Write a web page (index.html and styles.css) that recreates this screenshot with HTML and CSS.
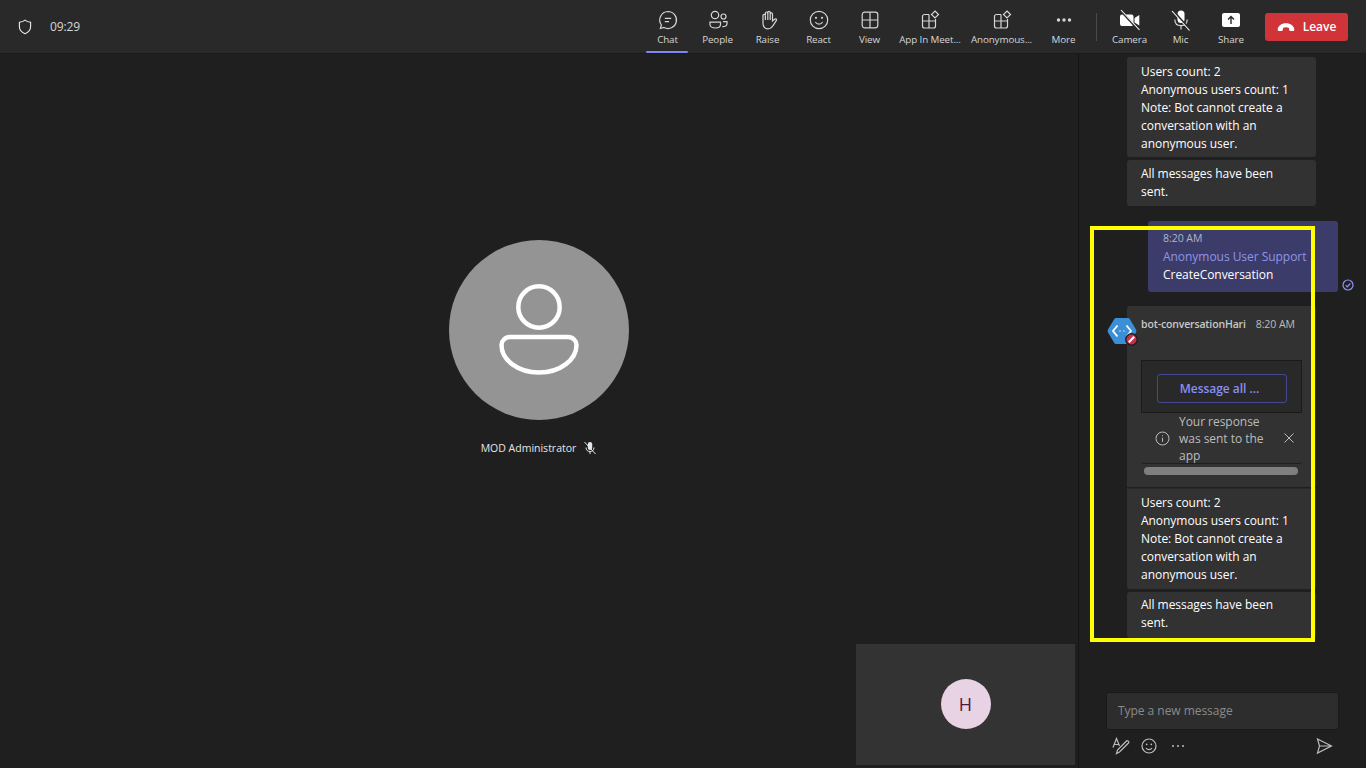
FILE: index.html
```html
<!doctype html>
<html>
  <head>
    <title>Meeting</title>
    <link rel="stylesheet" href="styles.css">
  </head>
  <body>
    <div class="topbar">
      <div class="call-info">
        <svg class="shield" width="16" height="16" viewBox="0 0 16 16"><path d="M8 1.200c1.700 1.400 3.500 2 5.600 2.100v4.200c0 3.400-2 5.800-5.600 7.200-3.600-1.400-5.600-3.800-5.600-7.200V3.300C4.500 3.200 6.300 2.600 8 1.200z"/></svg>
        <span class="timer">09:29</span>
      </div>
      <div class="tools">
        <div class="tool active">
          <svg width="22" height="22" viewBox="0 0 22 22"><path d="M11 2.500a8.500 8.500 0 1 1-4 16l-3.600 1 1-3.500A8.500 8.500 0 0 1 11 2.500z"/><path d="M7.800 9.300h6.400M7.800 12.700h4.200"/></svg>
          <span>Chat</span>
        </div>
        <div class="tool people">
          <svg width="22" height="22" viewBox="0 0 22 22"><circle cx="8" cy="6" r="3.700"/><circle cx="16.500" cy="7.500" r="2.500"/><path d="M3 13.200h10.500v2.300c0 2.200-2.300 3.500-5.200 3.500S3 17.700 3 15.500z"/><path d="M16 12.700h4v1.800c0 2-1.800 3.200-4.600 3.200"/></svg>
          <span>People</span>
        </div>
        <div class="tool">
          <svg width="22" height="22" viewBox="0 0 22 22"><path d="M6 14V6.500a1.200 1.200 0 0 1 2.400 0V4.200a1.200 1.200 0 0 1 2.400 0V3.500a1.200 1.200 0 0 1 2.400 0v1.200a1.200 1.200 0 0 1 2.300.3V12l2-1.800c1.200-1 2.600.2 1.800 1.400l-3.400 5.200c-1.100 1.800-2.700 3-5 3-3 0-4.900-2-4.900-5.800z"/><path d="M8.400 6.500V11M10.800 4v7M13.200 4.500V11"/></svg>
          <span>Raise</span>
        </div>
        <div class="tool">
          <svg width="22" height="22" viewBox="0 0 22 22"><circle cx="11" cy="11" r="8.700"/><circle class="fill" cx="8" cy="8.800" r="1.100"/><circle class="fill" cx="14" cy="8.800" r="1.100"/><path d="M7.300 13c1 1.500 2.200 2.200 3.700 2.200s2.700-.7 3.700-2.200"/></svg>
          <span>React</span>
        </div>
        <div class="tool">
          <svg width="22" height="22" viewBox="0 0 22 22"><rect x="3.200" y="3.200" width="15.600" height="15.600" rx="2.500"/><path d="M11 3.200v15.600M3.200 11h15.600"/></svg>
          <span>View</span>
        </div>
        <div class="tool app">
          <svg width="22" height="22" viewBox="0 0 22 22"><path d="M10 5.500H5.500a2 2 0 0 0-2 2V17a2 2 0 0 0 2 2h9a2 2 0 0 0 2-2v-7M3.500 12h13M10 5.500V19"/><path d="M16 2l3.500 3.500L16 9l-3.500-3.500z"/></svg>
          <span>App In Meet...</span>
        </div>
        <div class="tool anon">
          <svg width="22" height="22" viewBox="0 0 22 22"><path d="M10 5.500H5.500a2 2 0 0 0-2 2V17a2 2 0 0 0 2 2h9a2 2 0 0 0 2-2v-7M3.500 12h13M10 5.500V19"/><path d="M16 2l3.500 3.500L16 9l-3.500-3.500z"/></svg>
          <span>Anonymous...</span>
        </div>
        <div class="tool">
          <svg width="22" height="22" viewBox="0 0 22 22"><circle class="fill" cx="5.500" cy="11" r="1.700"/><circle class="fill" cx="11" cy="11" r="1.700"/><circle class="fill" cx="16.500" cy="11" r="1.700"/></svg>
          <span>More</span>
        </div>
        <div class="tool-sep"></div>
        <div class="tool">
          <svg width="22" height="22" viewBox="0 0 22 22"><path class="solid" d="M3 5.500h9.500a2 2 0 0 1 2 2v7.500a2 2 0 0 1-2 2H3a2 2 0 0 1-2-2V7.500a2 2 0 0 1 2-2z"/><path class="solid" d="M15.500 9l4.800-3v10.500L15.500 13.500z"/><path class="cut" d="M1 1l18.500 20"/><path class="slash" d="M2 1l18.500 20"/></svg>
          <span>Camera</span>
        </div>
        <div class="tool">
          <svg width="22" height="22" viewBox="0 0 22 22"><rect class="solid" x="7.500" y="1.500" width="7" height="12.500" rx="3.500"/><path d="M4.800 10.500c0 3.800 2.500 6.200 6.200 6.200s6.200-2.400 6.200-6.200M11 16.700v3.800"/><path class="cut" d="M2.800 1.500l17 19"/><path class="slash" d="M2 2l17.500 19.500"/></svg>
          <span>Mic</span>
        </div>
        <div class="tool share">
          <svg width="22" height="22" viewBox="0 0 22 22"><rect class="solid" x="2" y="4" width="18" height="14" rx="2"/><path class="on-solid" d="M11 15V8M8 10.500L11 7.500l3 3"/></svg>
          <span>Share</span>
        </div>
        <div class="leave">
          <svg width="18" height="10" viewBox="0 0 18 10"><path d="M.7 7.400C1 4 4.400 1.300 9 1.300s8 2.700 8.300 6.100c.1 1-.5 1.500-1.300 1.500h-2.600c-.8 0-1.300-.5-1.300-1.300V5.900C11 5.400 10 5.200 9 5.200s-2 .2-3.100.7v1.700c0 .8-.5 1.300-1.300 1.300H2c-.8 0-1.400-.5-1.300-1.500z"/></svg>
          <span>Leave</span>
        </div>
      </div>
    </div>

    <div class="main">
      <div class="stage">
        <div class="participant">
          <div class="avatar">
            <svg width="84" height="92" viewBox="0 0 84 92"><circle cx="42" cy="23" r="20.700"/><path d="M13 53h58c5 0 8.500 4 8.500 8C79.500 76 63 88.500 42 88.500S4.500 76 4.500 61c0-4 3.500-8 8.500-8z"/></svg>
          </div>
          <div class="name-tag">
            <span>MOD Administrator</span>
            <svg width="14" height="14" viewBox="0 0 14 14"><rect x="4.800" y="1" width="4.400" height="8" rx="2.200"/><path class="line" d="M3 6.500c0 2.500 1.500 4 4 4s4-1.500 4-4M7 10.500V13"/><path class="line" d="M1.500 1l11 12"/></svg>
          </div>
        </div>
        <div class="self-tile"><div class="initial">H</div></div>
      </div>

      <div class="chat">
        <div class="messages">
          <div class="bubble other top-group">
            <div class="block">Users count: 2<br>Anonymous users count: 1<br>Note: Bot cannot create a conversation with an anonymous user.</div>
          </div>
          <div class="bubble other second top-group">
            <div class="block">All messages have been sent.</div>
          </div>

          <div class="mine-row">
            <div class="bubble mine">
              <div class="msg-time">8:20 AM</div>
              <div class="mention">Anonymous User Support</div>
              <div>CreateConversation</div>
            </div>
            <svg class="read" width="12" height="12" viewBox="0 0 12 12"><circle cx="6" cy="6" r="5"/><path d="M3.700 6.200l1.600 1.600 3-3.300"/></svg>
          </div>

          <div class="bot-row">
            <div class="bot-icon">
              <svg width="30" height="30" viewBox="0 0 30 30"><path class="hex" d="M9 2h12a2 2 0 0 1 1.700 1L29 13.500a3 3 0 0 1 0 3L22.700 27a2 2 0 0 1-1.700 1H9a2 2 0 0 1-1.700-1L1 16.500a3 3 0 0 1 0-3L7.300 3A2 2 0 0 1 9 2z"/><path class="code" d="M10.500 9.500L6 15l4.500 5.500M19.500 9.500L24 15l-4.500 5.500"/><circle class="dot" cx="13" cy="15" r=".8"/><circle class="dot" cx="17" cy="15" r=".8"/></svg>
              <svg class="blocked" width="13" height="13" viewBox="0 0 13 13"><circle class="ring" cx="6.500" cy="6.500" r="6.500"/><circle class="red" cx="6.500" cy="6.500" r="5"/><path class="bar" d="M3.800 9.200l5.400-5.400"/></svg>
            </div>
            <div class="bubble other bot">
              <div class="bot-head">
                <span class="bot-name">bot-conversationHari</span>
                <span class="bot-time">8:20 AM</span>
              </div>
              <div class="card">
                <div class="card-btn">Message all ...</div>
              </div>
              <div class="notice">
                <svg class="info" width="15" height="15" viewBox="0 0 15 15"><circle cx="7.500" cy="7.500" r="6.500"/><path d="M7.500 6.800v4M7.500 4.300v.9"/></svg>
                <div class="notice-text">Your response was sent to the app</div>
                <svg class="close" width="10" height="10" viewBox="0 0 10 10"><path d="M.5.500l9 9M9.500.500l-9 9"/></svg>
              </div>
              <div class="scrollbar"></div>
            </div>
          </div>
          <div class="bubble other attached">
            <div class="block">Users count: 2<br>Anonymous users count: 1<br>Note: Bot cannot create a conversation with an anonymous user.</div>
          </div>
          <div class="bubble other second">
            <div class="block">All messages have been sent.</div>
          </div>
        </div>

        <div class="composer">
          <div class="input">Type a new message</div>
          <div class="composer-tools">
            <svg width="18" height="18" viewBox="0 0 18 18"><path d="M1 10.500L4.500 1.500l3 7.500M2.200 7.500h4.200"/><path d="M4.500 16.500l1-3.500 9-9c1-1 3 .8 2 2l-9 9z"/></svg>
            <svg width="16" height="16" viewBox="0 0 16 16"><circle cx="8" cy="8" r="7"/><circle class="fill" cx="5.700" cy="6.300" r=".9"/><circle class="fill" cx="10.300" cy="6.300" r=".9"/><path d="M5 10c.8 1.100 1.800 1.700 3 1.700s2.200-.6 3-1.700"/></svg>
            <svg class="dots" width="14" height="14" viewBox="0 0 14 14"><circle class="fill" cx="2" cy="7" r="1"/><circle class="fill" cx="7" cy="7" r="1"/><circle class="fill" cx="12" cy="7" r="1"/></svg>
            <svg class="send" width="18" height="18" viewBox="0 0 18 18"><path d="M2.500 2l14 7-14 7 2-7zM4.500 9h12"/></svg>
          </div>
        </div>
      </div>
    </div>

    <div class="highlight"></div>
  </body>
</html>
```

FILE: styles.css
```css
html, body {margin: 0; height: 100%; overflow: hidden;}
body {background: #1f1f1f; color: #fff; font-family: "Open Sans", "Noto Sans", sans-serif; font-size: 12px; line-height: 18px; display: flex; flex-direction: column; height: 768px;}
svg {display: block; fill: none; stroke: currentColor; stroke-width: 1.200;}
svg .fill {fill: currentColor; stroke: none;}

/* top bar */
.topbar {height: 53px; background: #292929; border-bottom: 1px solid #1a1a1a; display: flex; justify-content: space-between; flex: none;}
.call-info {display: flex; align-items: center; padding-left: 17px; color: #d6d6d6;}
.shield {stroke-width: 1.100; color: #eee;}
.timer {margin-left: 17px; font-size: 12px; letter-spacing: -.1px;}
.tools {display: flex; align-items: flex-start; padding-right: 18px;}
.tool {width: 51px; height: 53px; box-sizing: border-box; padding-top: 9px; display: flex; flex-direction: column; align-items: center; color: #d6d6d6; position: relative;}
.tool span {font-size: 9.800px; line-height: 14px; margin-top: 2px; white-space: nowrap; letter-spacing: -.1px;}
.tool.people {width: 49px;}
.tool.app {width: 70px;}
.tool.anon {width: 73px;}
.tool.share {width: 50px;}
.tool.active:after {content: ""; position: absolute; left: 4px; right: 5px; bottom: 0; height: 2px; background: #7f85f5; border-radius: 1px;}
.tool-sep {width: 1px; height: 28px; margin: 13px 7px 0 7px; background: #4a4a4a;}
.tool .solid {fill: #fff; stroke: none;}
.tool .on-solid {stroke: #292929; stroke-width: 1.400;}
.tool .cut {stroke: #292929; stroke-width: 2;}
.tool .slash {stroke: #fff; stroke-width: 1.100;}
.leave {width: 83px; height: 28px; margin: 13px 0 0 9px; background: #d13438; border-radius: 3px; display: flex; align-items: center; justify-content: center; gap: 8px; font-weight: 600; font-size: 12px;}
.leave svg {fill: #fff; stroke: none;}

/* main area */
.main {flex: 1; display: flex; min-height: 0;}
.stage {flex: 1; position: relative; display: flex; justify-content: center;}
.participant {padding-top: 186px; display: flex; flex-direction: column; align-items: center;}
.avatar {width: 180px; height: 180px; border-radius: 50%; background: #949494; display: flex; align-items: center; justify-content: center;}
.avatar svg {stroke: #fff; stroke-width: 4.500;}
.name-tag {display: flex; align-items: center; gap: 7px; margin-top: 19px; font-size: 10.500px; color: #e6e6e6;}
.name-tag svg {fill: #e6e6e6; stroke: none;}
.name-tag svg .line {fill: none; stroke: #e6e6e6; stroke-width: 1;}
.self-tile {position: absolute; right: 3px; bottom: 3px; width: 219px; height: 121px; box-sizing: border-box; padding-bottom: 1px; background: #333; display: flex; align-items: center; justify-content: center;}
.initial {width: 50px; height: 50px; border-radius: 50%; background: #e8d3e4; color: #4f1a42; font-size: 18px; line-height: 50px; text-align: center;}

/* chat panel */
.chat {width: 287px; flex: none; border-left: 1px solid #141414; display: flex; flex-direction: column; letter-spacing: -.04px;}
.messages {flex: 1; padding-top: 3px; min-height: 0; overflow: hidden;}
.bubble {box-sizing: border-box; border-radius: 3px;}
.other {background: #323232; width: 189px; margin-left: 48px;}
.block {padding: 5px 14px;}
.top-group .block {padding: 6px 14px 4px;}
.second {margin-top: 3px;}
.second .block {padding: 4px 14px 6px;}
.second.top-group .block {padding: 5px 14px;}
.attached {margin-top: 1px; border-top: 1px solid #292929; border-radius: 0 0 3px 3px;}
.mine-row {display: flex; margin-top: 15px; margin-left: 69px; align-items: flex-end;}
.mine {width: 190px; height: 71px; background: #3b3c69; padding: 8px 0 0 15px; line-height: 18px;}
.msg-time {font-size: 10.500px; color: #b4b4c6; margin-bottom: 1px;}
.mention {color: #8f94e8; white-space: nowrap;}
.read {margin: 0 0 0 4px; position: relative; top: -1px; color: #8f94f5; stroke-width: 1.200;}
.bot-row {margin-top: 14px; position: relative;}
.bot-icon {position: absolute; left: 28px; top: 10px; width: 30px; height: 30px;}
.bot-icon svg {stroke: none;}
.bot-icon .hex {fill: #3b8fd6;}
.bot-icon .code {stroke: #fff; stroke-width: 1.800;}
.bot-icon .dot {fill: #cfe4f7;}
.blocked {position: absolute; right: -1px; bottom: 0;}
.blocked .ring {fill: #1f1f1f;}
.blocked .red {fill: #c4314b;}
.blocked .bar {stroke: #fff; stroke-width: 2.200;}
.bot {height: 181px; padding: 0 14px; border-radius: 3px 3px 0 0;}
.bot-head {height: 54px; padding-top: 9px; box-sizing: border-box; display: flex; justify-content: space-between; font-size: 10.500px; color: #c8c8c8; white-space: nowrap;}
.bot-name {font-weight: 600; letter-spacing: -.15px;}
.bot-time {margin-right: 7px; color: #bdbdbd;}
.card {width: 161px; height: 53px; box-sizing: border-box; background: #292929; border: 1px solid #1a1a1a; padding: 13px 14px 13px 15px;}
.card-btn {height: 29px; box-sizing: border-box; border: 1px solid #444791; border-radius: 3px; padding-right: 5px; color: #8a8ef5; font-weight: 600; line-height: 27px; text-align: center;}
.notice {width: 161px; height: 51px; box-sizing: border-box; border-bottom: 1px solid #1f1f1f; border-radius: 0 0 3px 3px; display: flex; align-items: center; color: #bcbcbc; line-height: 17px;}
.info {margin-left: 14px; flex: none; stroke-width: 1;}
.notice-text {width: 88px; margin-left: 9px; flex: none;}
.close {margin-left: 17px; flex: none; stroke-width: 1;}
.scrollbar {width: 154px; height: 8px; margin: 3px 0 0 3px; background: #7f7f7f; border-radius: 4px;}

/* composer */
.composer {flex: none; height: 76px; padding-left: 27px;}
.input {width: 233px; height: 38px; box-sizing: border-box; background: #2d2d2d; border: 1px solid #1a1a1a; border-radius: 3px; padding: 9px 11px; color: #8a8a8a;}
.composer-tools {display: flex; align-items: center; box-sizing: border-box; width: 227px; height: 32px; padding-left: 6px; color: #bdbdbd; gap: 11px;}
.composer-tools .dots {margin-left: 3px;}
.composer-tools .send {margin-left: auto;}

/* marker drawn over the screenshot */
.highlight {position: absolute; left: 1090px; top: 226px; width: 225px; height: 416px; box-sizing: border-box; border: 4px solid #ffff00;}
```
